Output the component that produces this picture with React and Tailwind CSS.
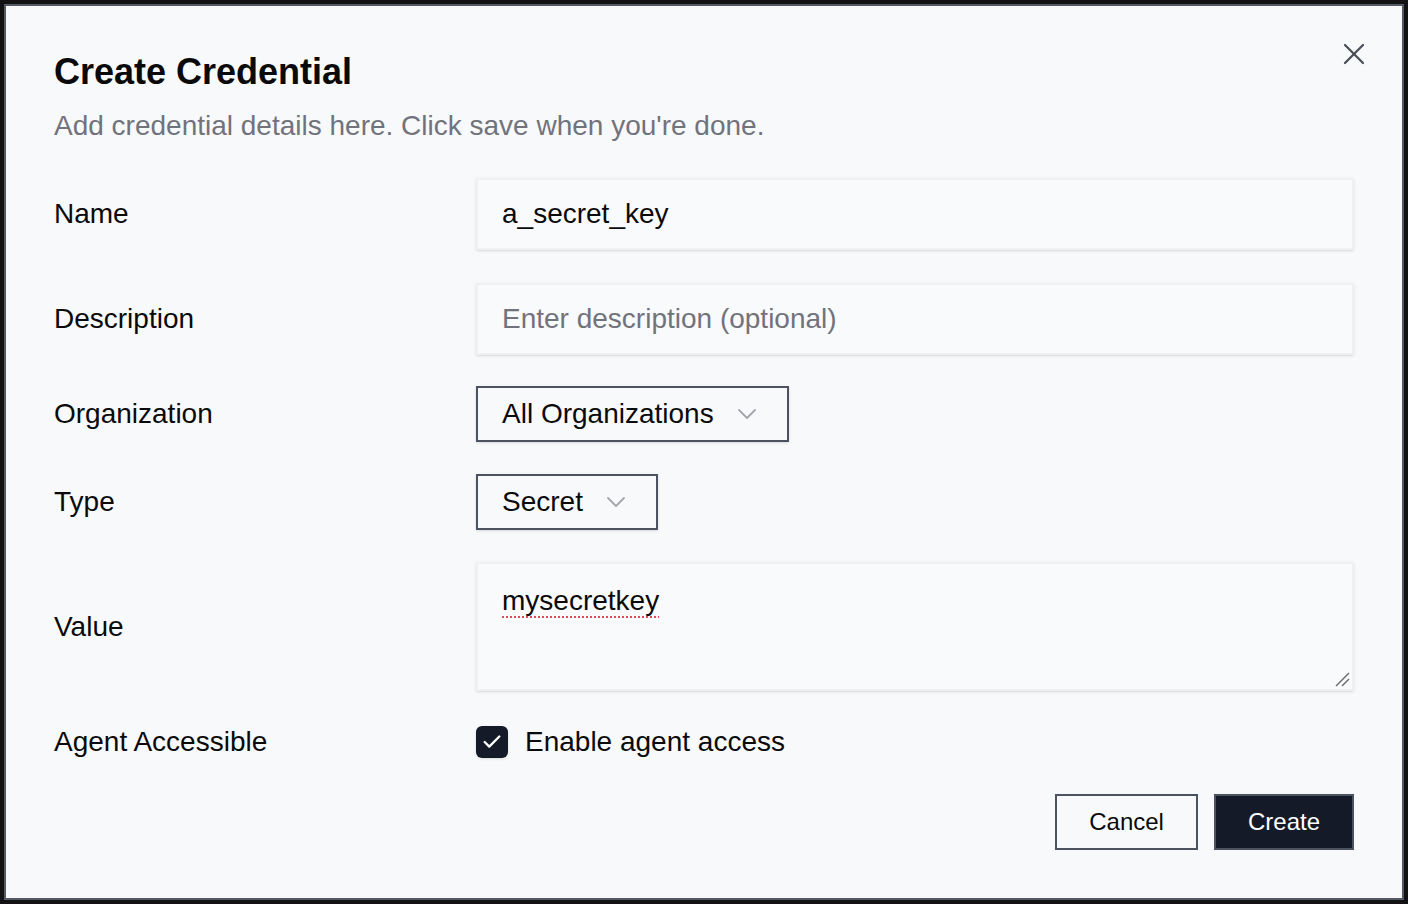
import React from "react";

function Chevron() {
  return (
    <svg width="18" height="10" viewBox="0 0 18 10" fill="none" className="shrink-0">
      <path d="M1 1l8 8 8-8" stroke="#a3a6ad" strokeWidth="1.8" strokeLinecap="round" strokeLinejoin="round" />
    </svg>
  );
}

function Label({ children }) {
  return <div className="text-[28px] leading-[36px] text-[#0a0a0a]">{children}</div>;
}

export default function App() {
  return (
    <div
      className="w-[1408px] h-[904px] bg-[#121212] p-[4px]"
      style={{ fontFamily: '"Liberation Sans", Arial, Helvetica, sans-serif' }}
    >
      <div className="relative w-[1400px] h-[896px] border-2 border-[#535a66] bg-[#f8f9fb] px-[48px] pt-[44px]">
        <button className="absolute top-[30px] right-[30px] w-[36px] h-[36px] flex items-center justify-center">
          <svg width="36" height="36" viewBox="0 0 24 24" fill="none" stroke="#4b4f57" strokeWidth="1.5" strokeLinecap="round">
            <path d="M18 6 6 18" />
            <path d="m6 6 12 12" />
          </svg>
        </button>

        <h2 className="text-[36px] leading-[44px] font-bold text-[#0a0a0a]">Create Credential</h2>
        <p className="mt-[14px] text-[28px] leading-[36px] text-[#71737c]">
          Add credential details here. Click save when you're done.
        </p>

        <div className="mt-[34px] grid grid-cols-[422px_1fr] items-center">
          <Label>Name</Label>
          <div className="h-[72px] border-2 border-[#eef0f3] bg-[#f9fafb] shadow-sm flex items-center px-[24px] text-[28px] text-[#0a0a0a]">
            a_secret_key
          </div>

          <div className="col-span-2 h-[33px]" />

          <Label>Description</Label>
          <div className="h-[72px] border-2 border-[#eef0f3] bg-[#f9fafb] shadow-sm flex items-center px-[24px] text-[28px] text-[#71737c]">
            Enter description (optional)
          </div>

          <div className="col-span-2 h-[31px]" />

          <Label>Organization</Label>
          <div>
            <div className="inline-flex h-[56px] items-center gap-[24px] border-2 border-[#4b5260] pl-[24px] pr-[31px] text-[28px] text-[#0a0a0a] shadow-sm">
              <span>All Organizations</span>
              <Chevron />
            </div>
          </div>

          <div className="col-span-2 h-[32px]" />

          <Label>Type</Label>
          <div>
            <div className="inline-flex h-[56px] items-center gap-[24px] border-2 border-[#4b5260] pl-[24px] pr-[31px] text-[28px] text-[#0a0a0a] shadow-sm">
              <span>Secret</span>
              <Chevron />
            </div>
          </div>

          <div className="col-span-2 h-[32px]" />

          <Label>Value</Label>
          <div className="relative h-[129px] border-2 border-[#eef0f3] bg-[#f9fafb] shadow-sm px-[24px] pt-[16px] text-[28px] leading-[42px] text-[#0a0a0a]">
            <span className="underline decoration-dotted decoration-[#e5484d] decoration-2 underline-offset-[6px]">mysecretkey</span>
            <svg className="absolute right-[2px] bottom-[2px]" width="16" height="16" viewBox="0 0 16 16" fill="none" stroke="#6b6b6b" strokeWidth="1.4">
              <path d="M2 15 15 2" />
              <path d="M8 15 15 8" />
            </svg>
          </div>

          <div className="col-span-2 h-[33px]" />

          <Label>Agent Accessible</Label>
          <div className="flex items-center gap-[17px]">
            <div className="w-[32px] h-[32px] rounded-[6px] bg-[#141a27] flex items-center justify-center shadow-sm">
              <svg width="22" height="22" viewBox="0 0 24 24" fill="none" stroke="#ffffff" strokeWidth="2.5" strokeLinecap="round" strokeLinejoin="round">
                <path d="M20 6 9 17l-5-5" />
              </svg>
            </div>
            <span className="text-[28px] leading-[36px] text-[#0a0a0a]">Enable agent access</span>
          </div>
        </div>

        <div className="mt-[34px] flex justify-end gap-[16px]">
          <button className="h-[56px] border-2 border-[#4b5260] px-[32px] text-[24px] text-[#0a0a0a]">Cancel</button>
          <button className="h-[56px] border-2 border-[#4b5260] bg-[#141a27] px-[32px] text-[24px] text-white">Create</button>
        </div>
      </div>
    </div>
  );
}
